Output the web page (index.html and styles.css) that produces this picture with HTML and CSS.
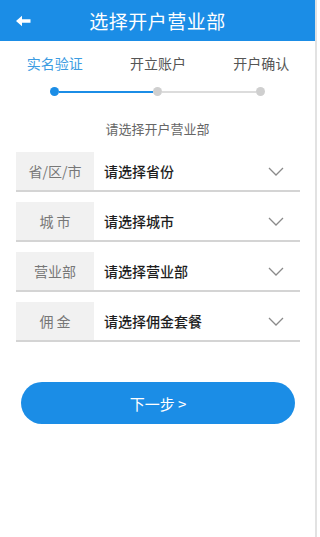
FILE: index.html
```html
<!DOCTYPE html>
<html lang="zh-CN">
<head>
<meta charset="utf-8">
<link rel="stylesheet" href="styles.css">
</head>
<body>
<div class="page">
  <header class="header">
    <svg class="back" width="16" height="12" viewBox="0 0 16 12"><path d="M1 6 L7 0.8 L7 4.3 L15.5 4.3 L15.5 7.7 L7 7.7 L7 11.2 Z" fill="#fff"/></svg>
    <h1 class="title">选择开户营业部</h1>
  </header>
  <div class="steps">
    <span class="step active">实名验证</span>
    <span class="step">开立账户</span>
    <span class="step">开户确认</span>
  </div>
  <div class="progress">
    <span class="dot on"></span><span class="line on"></span><span class="dot"></span><span class="line"></span><span class="dot"></span>
  </div>
  <p class="subtitle">请选择开户营业部</p>
  <div class="form">
    <div class="row"><span class="label">省/区/市</span><span class="value">请选择省份</span><svg class="chev" width="16" height="9" viewBox="0 0 16 9"><path d="M1 1 L8 8 L15 1" fill="none" stroke="#8a8a8a" stroke-width="1.3"/></svg></div>
    <div class="row"><span class="label">城 市</span><span class="value">请选择城市</span><svg class="chev" width="16" height="9" viewBox="0 0 16 9"><path d="M1 1 L8 8 L15 1" fill="none" stroke="#8a8a8a" stroke-width="1.3"/></svg></div>
    <div class="row"><span class="label">营业部</span><span class="value">请选择营业部</span><svg class="chev" width="16" height="9" viewBox="0 0 16 9"><path d="M1 1 L8 8 L15 1" fill="none" stroke="#8a8a8a" stroke-width="1.3"/></svg></div>
    <div class="row"><span class="label">佣 金</span><span class="value">请选择佣金套餐</span><svg class="chev" width="16" height="9" viewBox="0 0 16 9"><path d="M1 1 L8 8 L15 1" fill="none" stroke="#8a8a8a" stroke-width="1.3"/></svg></div>
  </div>
  <button class="next">下一步 &gt;</button>
</div>
</body>
</html>
```
FILE: styles.css
```css
* { box-sizing: border-box; }
html, body { margin: 0; padding: 0; background: #fff; }
body { font-family: "Noto Sans CJK SC", "Noto Sans", sans-serif; }
.page {
  width: 317px;
  height: 537px;
  border-right: 2px solid #e2e2e2;
  overflow: hidden;
}
.header {
  height: 41px;
  background: #1b8de6;
  display: flex;
  align-items: center;
  justify-content: center;
  position: relative;
}
.back { position: absolute; left: 15px; top: 15px; }
.title {
  margin: 0;
  color: #fff;
  font-size: 19px;
  font-weight: normal;
  letter-spacing: 0.5px;
}
.steps {
  display: grid;
  grid-template-columns: repeat(3, 1fr);
  padding: 12px 2px 0 3px;
}
.step {
  text-align: center;
  font-size: 14px;
  line-height: 20px;
  color: #555;
}
.step.active { color: #3c9ce2; }
.progress {
  display: flex;
  align-items: center;
  height: 9px;
  margin: 14px 0 0 50px;
}
.dot { width: 9px; height: 9px; border-radius: 50%; background: #cfcfcf; flex: none; }
.dot.on { background: #1b8de6; }
.line { width: 94px; height: 2px; background: #dcdcdc; flex: none; }
.line.on { background: #1b8de6; }
.subtitle {
  margin: 23px 0 0;
  text-align: center;
  font-size: 13px;
  line-height: 20px;
  color: #666;
}
.form { margin: 13px 15px 0 16px; }
.row {
  display: flex;
  align-items: center;
  height: 40px;
  border-bottom: 2px solid #d4d4d4;
  margin-bottom: 10px;
}
.label {
  width: 78px;
  align-self: stretch;
  background: #f1f1f1;
  display: flex;
  align-items: center;
  justify-content: center;
  font-size: 14px;
  color: #777;
}
.value {
  flex: 1;
  padding-left: 10px;
  font-size: 14px;
  color: #1e1e1e;
  font-weight: 500;
}
.chev { margin-right: 16px; }
.next {
  display: block;
  margin: 40px 0 0 21px;
  width: 274px;
  height: 42px;
  border: none;
  border-radius: 21px;
  background: #1b8de6;
  color: #fff;
  font-family: inherit;
  font-size: 15px;
}
```
